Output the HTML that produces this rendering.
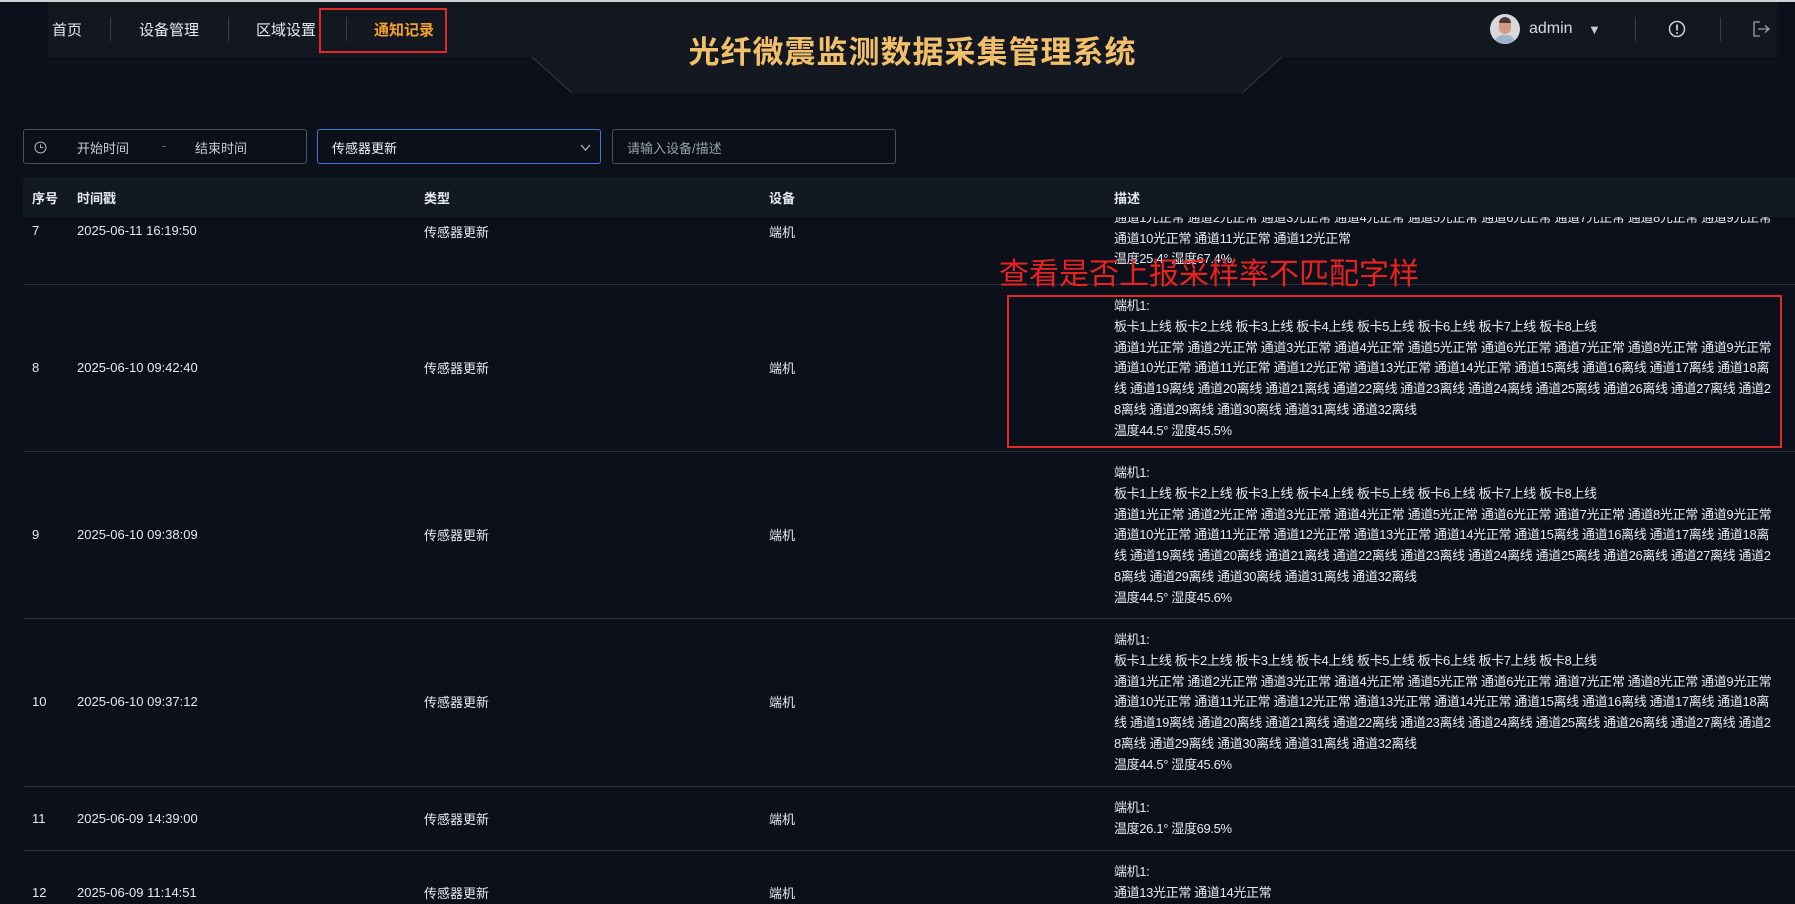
<!DOCTYPE html>
<html><head><meta charset="utf-8"><style>
*{margin:0;padding:0;box-sizing:border-box}
body{width:1795px;height:899px;overflow:hidden;background:#0b101b;font-family:"Liberation Sans","Noto Sans CJK SC",sans-serif;color:#e6eaf0;position:relative}
.a{position:absolute;white-space:nowrap}
.nav{position:absolute;left:48px;top:2px;width:1729px;height:55px;background:#131820}
.topline{position:absolute;left:0;top:0;width:1795px;height:2px;background:#cfd3d8}
.navi{font-size:15px;top:19px;color:#e8ecf2}
.sep{position:absolute;top:17px;width:1px;height:24px;background:#3a4049}
.cell{font-size:13px;color:#e6eaf0}
.desc{position:absolute;left:1114px;font-size:13px;line-height:20.8px;white-space:nowrap;letter-spacing:-0.35px}
.row{position:absolute;left:23px;width:1772px;border-bottom:1px solid #2a303a}
.inp{position:absolute;top:129px;height:35px;border:1px solid #4a5260;border-radius:3px;font-size:13px;color:#c8ccd2}
</style></head><body>
<div class="topline"></div>
<div class="nav"></div>
<svg class="a" style="left:520px;top:57px" width="770" height="40"><defs><linearGradient id="g" x1="0" x2="1"><stop offset="0" stop-color="#6b5a2a" stop-opacity="0.3"/><stop offset="0.5" stop-color="#c9a24a"/><stop offset="1" stop-color="#6b5a2a" stop-opacity="0.3"/></linearGradient></defs><polygon points="12,0 762,0 722,36 52,36" fill="#141921"/><line x1="52" y1="36" x2="722" y2="36" stroke="url(#g)" stroke-width="2"/><line x1="12" y1="0" x2="52" y2="36" stroke="#3a3a36" stroke-width="1"/><line x1="762" y1="0" x2="722" y2="36" stroke="#3a3a36" stroke-width="1"/></svg>
<div class="a" style="left:0;width:1825px;text-align:center;top:27px;font-size:31px;font-weight:bold;color:#f2bf6a;letter-spacing:1px">光纤微震监测数据采集管理系统</div>
<div class="a navi" style="left:52px">首页</div>
<div class="sep" style="left:110px"></div>
<div class="a navi" style="left:139px">设备管理</div>
<div class="sep" style="left:228px"></div>
<div class="a navi" style="left:256px">区域设置</div>
<div class="sep" style="left:346px"></div>
<div class="a navi" style="left:374px;color:#f4a12e;font-weight:bold">通知记录</div>
<div class="a" style="left:319px;top:8px;width:128px;height:45px;border:2px solid #e02a2a"></div>
<div class="a" style="left:1490px;top:14px;width:30px;height:30px;border-radius:50%;background:#d8d8dc;overflow:hidden"><div style="position:absolute;left:9px;top:5px;width:12px;height:15px;border-radius:6px;background:#d49a86"></div><div style="position:absolute;left:9px;top:3px;width:12px;height:6px;border-radius:6px 6px 0 0;background:#4a3a32"></div><div style="position:absolute;left:5px;top:21px;width:20px;height:12px;border-radius:8px 8px 0 0;background:#9fb3c8"></div></div>
<div class="a" style="left:1529px;top:20px;font-size:16px;color:#d5d9df">admin</div>
<div class="a" style="left:1588px;top:22px;font-size:13px;color:#c8ccd2">▼</div>
<div class="sep" style="left:1635px"></div>
<svg class="a" style="left:1668px;top:20px" width="18" height="18"><circle cx="9" cy="9" r="7.5" fill="none" stroke="#c8ccd2" stroke-width="1.5"/><line x1="9" y1="4.5" x2="9" y2="10.5" stroke="#c8ccd2" stroke-width="1.8"/><circle cx="9" cy="13" r="1" fill="#c8ccd2"/></svg>
<div class="sep" style="left:1720px"></div>
<svg class="a" style="left:1753px;top:21px" width="18" height="16"><path d="M7 1H1V15H7" fill="none" stroke="#9aa0a8" stroke-width="1.3"/><path d="M5 8H16M12 4.5L16 8L12 11.5" fill="none" stroke="#9aa0a8" stroke-width="1.3"/></svg>

<div class="inp" style="left:23px;width:284px"><svg class="a" style="left:10px;top:11px" width="13" height="13"><circle cx="6.5" cy="6.5" r="5.5" fill="none" stroke="#b0b4ba"/><path d="M6.5 3.5V6.5H9" fill="none" stroke="#b0b4ba"/></svg><span class="a" style="left:53px;top:8px">开始时间</span><span class="a" style="left:138px;top:8px;color:#666">-</span><span class="a" style="left:171px;top:8px">结束时间</span></div>
<div class="inp" style="left:317px;width:284px;border-color:#3b7ad8"><span class="a" style="left:14px;top:8px;color:#eef1f5">传感器更新</span><svg class="a" style="left:262px;top:14px" width="11" height="8"><path d="M1 1L5.5 6L10 1" fill="none" stroke="#b0b4ba" stroke-width="1.3"/></svg></div>
<div class="inp" style="left:612px;width:284px"><span class="a" style="left:14px;top:8px;color:#9aa0a8">请输入设备/描述</span></div>

<div class="row" style="top:177px;height:108px"></div>
<div class="desc" style="top:187px">端机1:<br>通道1光正常 通道2光正常 通道3光正常 通道4光正常 通道5光正常 通道6光正常 通道7光正常 通道8光正常 通道9光正常<br>通道10光正常 通道11光正常 通道12光正常<br>温度25.4° 湿度67.4%</div>
<div class="a cell" style="left:32px;top:223px">7</div><div class="a cell" style="left:77px;top:223px">2025-06-11 16:19:50</div><div class="a cell" style="left:424px;top:222px">传感器更新</div><div class="a cell" style="left:769px;top:222px">端机</div>

<div class="row" style="top:285px;height:167px"></div>
<div class="desc" style="top:296px">端机1:<br>板卡1上线 板卡2上线 板卡3上线 板卡4上线 板卡5上线 板卡6上线 板卡7上线 板卡8上线<br>通道1光正常 通道2光正常 通道3光正常 通道4光正常 通道5光正常 通道6光正常 通道7光正常 通道8光正常 通道9光正常<br>通道10光正常 通道11光正常 通道12光正常 通道13光正常 通道14光正常 通道15离线 通道16离线 通道17离线 通道18离<br>线 通道19离线 通道20离线 通道21离线 通道22离线 通道23离线 通道24离线 通道25离线 通道26离线 通道27离线 通道2<br>8离线 通道29离线 通道30离线 通道31离线 通道32离线<br>温度44.5° 湿度45.5%</div>
<div class="a cell" style="left:32px;top:360px">8</div><div class="a cell" style="left:77px;top:360px">2025-06-10 09:42:40</div><div class="a cell" style="left:424px;top:358px">传感器更新</div><div class="a cell" style="left:769px;top:358px">端机</div>

<div class="row" style="top:452px;height:167px"></div>
<div class="desc" style="top:463px">端机1:<br>板卡1上线 板卡2上线 板卡3上线 板卡4上线 板卡5上线 板卡6上线 板卡7上线 板卡8上线<br>通道1光正常 通道2光正常 通道3光正常 通道4光正常 通道5光正常 通道6光正常 通道7光正常 通道8光正常 通道9光正常<br>通道10光正常 通道11光正常 通道12光正常 通道13光正常 通道14光正常 通道15离线 通道16离线 通道17离线 通道18离<br>线 通道19离线 通道20离线 通道21离线 通道22离线 通道23离线 通道24离线 通道25离线 通道26离线 通道27离线 通道2<br>8离线 通道29离线 通道30离线 通道31离线 通道32离线<br>温度44.5° 湿度45.6%</div>
<div class="a cell" style="left:32px;top:527px">9</div><div class="a cell" style="left:77px;top:527px">2025-06-10 09:38:09</div><div class="a cell" style="left:424px;top:525px">传感器更新</div><div class="a cell" style="left:769px;top:525px">端机</div>

<div class="row" style="top:619px;height:168px"></div>
<div class="desc" style="top:630px">端机1:<br>板卡1上线 板卡2上线 板卡3上线 板卡4上线 板卡5上线 板卡6上线 板卡7上线 板卡8上线<br>通道1光正常 通道2光正常 通道3光正常 通道4光正常 通道5光正常 通道6光正常 通道7光正常 通道8光正常 通道9光正常<br>通道10光正常 通道11光正常 通道12光正常 通道13光正常 通道14光正常 通道15离线 通道16离线 通道17离线 通道18离<br>线 通道19离线 通道20离线 通道21离线 通道22离线 通道23离线 通道24离线 通道25离线 通道26离线 通道27离线 通道2<br>8离线 通道29离线 通道30离线 通道31离线 通道32离线<br>温度44.5° 湿度45.6%</div>
<div class="a cell" style="left:32px;top:694px">10</div><div class="a cell" style="left:77px;top:694px">2025-06-10 09:37:12</div><div class="a cell" style="left:424px;top:692px">传感器更新</div><div class="a cell" style="left:769px;top:692px">端机</div>

<div class="row" style="top:787px;height:64px"></div>
<div class="desc" style="top:798px">端机1:<br>温度26.1° 湿度69.5%</div>
<div class="a cell" style="left:32px;top:811px">11</div><div class="a cell" style="left:77px;top:811px">2025-06-09 14:39:00</div><div class="a cell" style="left:424px;top:809px">传感器更新</div><div class="a cell" style="left:769px;top:809px">端机</div>

<div class="desc" style="top:862px">端机1:<br>通道13光正常 通道14光正常</div>
<div class="a cell" style="left:32px;top:885px">12</div><div class="a cell" style="left:77px;top:885px">2025-06-09 11:14:51</div><div class="a cell" style="left:424px;top:883px">传感器更新</div><div class="a cell" style="left:769px;top:883px">端机</div>

<div class="a" style="left:23px;top:177px;width:1772px;height:40px;background:#131922"></div>
<div class="a cell" style="left:32px;top:188px;font-weight:bold">序号</div>
<div class="a cell" style="left:77px;top:188px;font-weight:bold">时间戳</div>
<div class="a cell" style="left:424px;top:188px;font-weight:bold">类型</div>
<div class="a cell" style="left:769px;top:188px;font-weight:bold">设备</div>
<div class="a cell" style="left:1114px;top:188px;font-weight:bold">描述</div>

<div class="a" style="left:999px;top:253px;font-size:30px;color:#e8231f;font-family:'Noto Sans CJK SC',sans-serif;line-height:36px">查看是否上报采样率不匹配字样</div>
<div class="a" style="left:1007px;top:295px;width:775px;height:153px;border:2px solid #e02a2a"></div>
</body></html>
